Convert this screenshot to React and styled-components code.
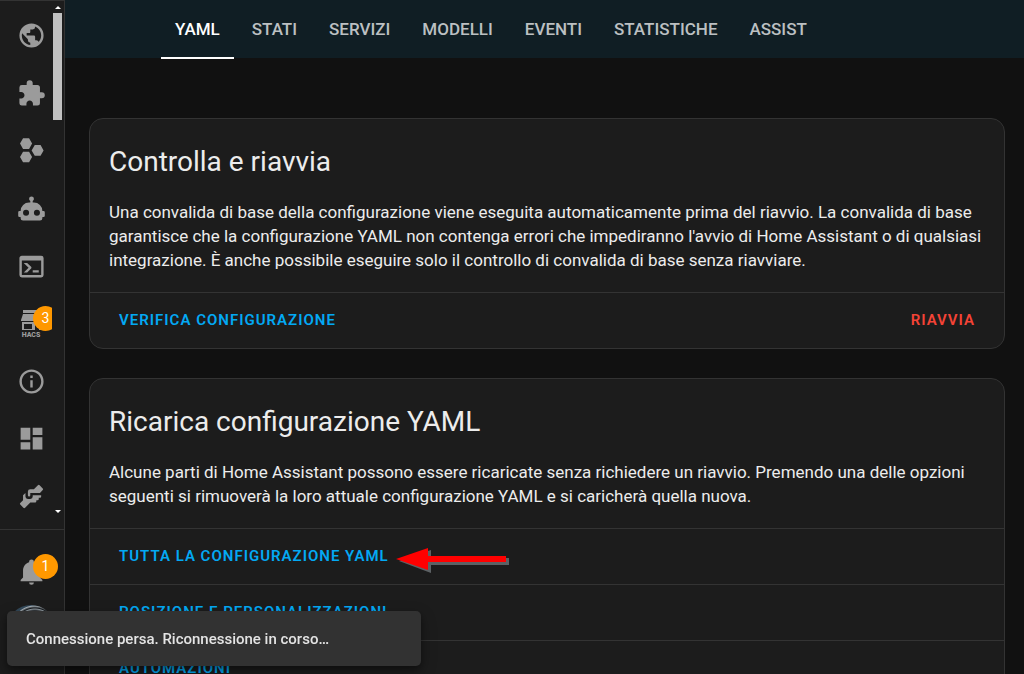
import React from "react";
import styled, { createGlobalStyle, css } from "styled-components";

const Global = createGlobalStyle`
  *, *::before, *::after { box-sizing: border-box; }
  body { margin: 0; background: #111; color: #ececec; font-family: Roboto, "Noto Sans", sans-serif; }
  button { font: inherit; background: none; border: 0; padding: 0; cursor: pointer; }
`;

const Shell = styled.div`display: flex; height: 100vh; overflow: hidden;`;

const Sidebar = styled.aside`
  flex: none; width: 65px; display: flex; flex-direction: column;
  background: #1c1c1c; border-right: 1px solid #333; border-top: 1px solid #333;
`;
const NavArea = styled.div`display: flex; flex: 1; min-height: 0;`;
const NavList = styled.nav`
  width: 52px; padding: 6px 0 4px; overflow: hidden;
  display: flex; flex-direction: column;
`;
const iconSlot = css`
  position: relative; display: flex; align-items: center; padding-left: 17px; color: #9b9b9b;
  svg { width: 29px; height: 29px; flex: none; fill: currentColor; }
`;
const NavItem = styled.a`${iconSlot} flex: 1;`;
const Badge = styled.span`
  position: absolute; left: 33px; top: ${(p) => p.$top}px; width: 25px; height: 25px;
  border-radius: 50%; background: #ff9800; color: #fff;
  font-size: 14px; line-height: 24px; text-align: center;
`;
const Scrollbar = styled.div`
  width: 12px; padding: 5px 2px 16px 1px; display: flex; flex-direction: column; align-items: center;
`;
const Thumb = styled.div`width: 9px; height: 107px; margin: 4px 0 auto; background: #c1c1c1;`;
const Caret = styled.div`
  border: 3px solid transparent; border-top-width: 0; border-bottom: 3px solid #fff;
  ${(p) => p.$down && "transform: rotate(180deg);"}
`;
const SidebarFoot = styled.div`flex: none; height: 145px; border-top: 1px solid #333; padding-top: 12px;`;
const FootItem = styled.button`${iconSlot} height: 58px; width: 100%;`;
const ProfileItem = styled(FootItem)`padding-left: 7px;`;
const Avatar = styled.span`
  width: 48px; height: 48px; border-radius: 50%;
  background: radial-gradient(circle at 58% 50%, #15181b 0 18px, #8f989e 20px, #14181c 21px, #a9b2b8 23px, #33495a 24px);
`;

const Main = styled.main`flex: 1; min-width: 0;`;
const Header = styled.header`
  height: 58px; padding-left: 96px; display: flex; gap: 4px; background: #101e24;
`;
const Tab = styled.button`
  padding: 0 14px 2px; height: 59px; font-size: 17px; font-weight: 500; color: #bcc0c2;
  ${(p) => p.$active && "color: #fff; box-shadow: inset 0 -2px #fff;"}
`;
const Content = styled.div`
  padding: 60px 19px 0 24px; display: flex; flex-direction: column; gap: 29px;
`;
const Card = styled.section`background: #1c1c1c; border: 1px solid #333; border-radius: 14px;`;
const CardBody = styled.div`padding: 21px 19px 20px;`;
const Title = styled.h1`margin: 0 0 16px; font-size: 28px; line-height: 44px; font-weight: 400;`;
const Text = styled.p`margin: 0; font-size: 17px; line-height: 24px;`;
const Row = styled.div`
  height: 56px; border-top: 1px solid #333; padding: 0 29px 2px;
  display: flex; align-items: center; justify-content: space-between;
`;
const Action = styled.button`
  position: relative; font-size: 15px; line-height: 20px; font-weight: 600; letter-spacing: 1px;
  text-transform: uppercase; color: ${(p) => (p.$danger ? "#f44336" : "#03a9f4")};
`;
const Pointer = styled.svg`position: absolute; left: 100%; top: 0; margin-left: 7px; overflow: visible;`;
const Snackbar = styled.div`
  position: fixed; left: 7px; bottom: 8px; width: 414px; height: 55px; padding: 0 19px;
  display: flex; align-items: center; border-radius: 5px; background: #323232; color: #e4e4e4;
  font-size: 15px; font-weight: 500; box-shadow: 0 3px 6px rgba(0,0,0,.3), 0 6px 16px rgba(0,0,0,.3);
`;

const Icon = ({ d }) => <svg viewBox="0 0 24 24" aria-hidden="true"><path d={d} /></svg>;

const paths = {
  earth: "M17.9,17.39C17.64,16.59 16.89,16 16,16H15V13A1,1 0 0,0 14,12H8V10H10A1,1 0 0,0 11,9V7H13A2,2 0 0,0 15,5V4.59C17.93,5.77 20,8.64 20,12C20,14.08 19.2,15.97 17.9,17.39M11,19.93C7.05,19.44 4,16.08 4,12C4,11.38 4.08,10.78 4.21,10.21L9,15V16A2,2 0 0,0 11,18M12,2A10,10 0 0,0 2,12A10,10 0 0,0 12,22A10,10 0 0,0 22,12A10,10 0 0,0 12,2Z",
  puzzle: "M20.5,11H19V7C19,5.89 18.1,5 17,5H13V3.5A2.5,2.5 0 0,0 10.5,1A2.5,2.5 0 0,0 8,3.5V5H4A2,2 0 0,0 2,7V10.8H3.5C5,10.8 6.2,12 6.2,13.5C6.2,15 5,16.2 3.5,16.2H2V20A2,2 0 0,0 4,22H7.8V20.5C7.8,19 9,17.8 10.5,17.8C12,17.8 13.2,19 13.2,20.5V22H17A2,2 0 0,0 19,20V16H20.5A2.5,2.5 0 0,0 23,13.5A2.5,2.5 0 0,0 20.5,11Z",
  hexagons: "M5,1.9H10L12.5,6.3L10,10.7H5L2.500,6.3ZM5,13H10L12.5,17.4L10,21.800H5L2.500,17.4ZM14.7,7.5H19.5L22,11.9L19.5,16.300H14.7L12.1,11.9Z",
  robot: "M12,2A2,2 0 0,1 14,4C14,4.74 13.6,5.39 13,5.73V7H14A7,7 0 0,1 21,14H22A1,1 0 0,1 23,15V18A1,1 0 0,1 22,19H21V20A2,2 0 0,1 19,22H5A2,2 0 0,1 3,20V19H2A1,1 0 0,1 1,18V15A1,1 0 0,1 2,14H3A7,7 0 0,1 10,7H11V5.73C10.4,5.39 10,4.74 10,4A2,2 0 0,1 12,2M7.5,13A2.5,2.5 0 0,0 5,15.5A2.5,2.5 0 0,0 7.5,18A2.5,2.5 0 0,0 10,15.5A2.5,2.5 0 0,0 7.5,13M16.5,13A2.5,2.5 0 0,0 14,15.5A2.5,2.5 0 0,0 16.5,18A2.5,2.5 0 0,0 19,15.5A2.5,2.5 0 0,0 16.5,13Z",
  terminal: "M20,19V7H4V19H20M20,3A2,2 0 0,1 22,5V19A2,2 0 0,1 20,21H4A2,2 0 0,1 2,19V5C2,3.89 2.9,3 4,3H20M13,17V15H18V17H13M9.58,13L5.57,9H8.4L11.7,12.3C12.09,12.69 12.09,13.33 11.7,13.72L8.42,17H5.59L9.58,13Z",
  info: "M11,9H13V7H11M12,20C7.59,20 4,16.41 4,12C4,7.59 7.59,4 12,4C16.41,4 20,7.59 20,12C20,16.41 16.41,20 12,20M12,2A10,10 0 0,0 2,12A10,10 0 0,0 12,22A10,10 0 0,0 22,12A10,10 0 0,0 12,2M11,17H13V11H11V17Z",
  dashboard: "M13,3V9H21V3M13,21H21V11H13M3,21H11V15H3M3,13H11V3H3V13Z",
  hands: "M11 6H14L17.29 2.7A1 1 0 0 1 18.71 2.7L21.29 5.29A1 1 0 0 1 21.29 6.7L19 9H11V11A1 1 0 0 1 10 12A1 1 0 0 1 9 11V8A2 2 0 0 1 11 6M5 11V15L2.71 17.29A1 1 0 0 0 2.71 18.71L5.29 21.29A1 1 0 0 0 6.71 21.29L11 17H15A1 1 0 0 0 16 16V15H17A1 1 0 0 0 18 14V13H19A1 1 0 0 0 20 12V11H13V12A2 2 0 0 1 11 14H9A2 2 0 0 1 7 12V9L5 11Z",
  bell: "M21,19V20H3V19L5,17V11C5,7.9 7.03,5.17 10,4.29C10,4.19 10,4.1 10,4A2,2 0 0,1 12,2A2,2 0 0,1 14,4C14,4.1 14,4.19 14,4.29C16.97,5.17 19,7.9 19,11V17L21,19M14,21A2,2 0 0,1 12,23A2,2 0 0,1 10,21",
};

const HacsIcon = () => (
  <svg viewBox="0 0 29 29" aria-hidden="true">
    <path d="M6 1H23V4H6ZM6 5H23L25 11V12H4V11ZM5 13H24V21H5ZM7 15V20H15V15ZM18 14V21H22V14Z" fillRule="evenodd" />
    <text x="14" y="28" textAnchor="middle" fontSize="7" fontWeight="900">HACS</text>
  </svg>
);

const nav = [
  ["Mappa", "earth"], ["Componenti", "puzzle"], ["Zigbee", "hexagons"], ["Robot", "robot"],
  ["Terminale", "terminal"], ["HACS", "hacs", 3], ["Informazioni", "info"],
  ["Plancia", "dashboard"], ["Assistenza", "hands"],
];
const tabs = ["YAML", "STATI", "SERVIZI", "MODELLI", "EVENTI", "STATISTICHE", "ASSIST"];

export default function App() {
  return (
    <Shell>
      <Global />
      <Sidebar>
        <NavArea>
          <NavList>
            {nav.map(([label, icon, count]) => (
              <NavItem key={label} href="#" aria-label={label}>
                {icon === "hacs" ? <HacsIcon /> : <Icon d={paths[icon]} />}
                {count && <Badge $top={11}>{count}</Badge>}
              </NavItem>
            ))}
          </NavList>
          <Scrollbar><Caret /><Thumb /><Caret $down /></Scrollbar>
        </NavArea>
        <SidebarFoot>
          <FootItem aria-label="Notifiche"><Icon d={paths.bell} /><Badge $top={12}>1</Badge></FootItem>
          <ProfileItem aria-label="Profilo"><Avatar /></ProfileItem>
        </SidebarFoot>
      </Sidebar>
      <Main>
        <Header>{tabs.map((t, i) => <Tab key={t} $active={i === 0}>{t}</Tab>)}</Header>
        <Content>
          <Card>
            <CardBody>
              <Title>Controlla e riavvia</Title>
              <Text>
                Una convalida di base della configurazione viene eseguita automaticamente prima del riavvio. La convalida di base garantisce che la configurazione YAML non contenga errori che impediranno l'avvio di Home Assistant o di qualsiasi integrazione. È anche possibile eseguire solo il controllo di convalida di base senza riavviare.
              </Text>
            </CardBody>
            <Row>
              <Action>Verifica configurazione</Action>
              <Action $danger>Riavvia</Action>
            </Row>
          </Card>
          <Card>
            <CardBody>
              <Title>Ricarica configurazione YAML</Title>
              <Text>
                Alcune parti di Home Assistant possono essere ricaricate senza richiedere un riavvio. Premendo una delle opzioni seguenti si rimuoverà la loro attuale configurazione YAML e si caricherà quella nuova.
              </Text>
            </CardBody>
            <Row>
              <Action>
                Tutta la configurazione YAML
                <Pointer width="113" height="26" viewBox="0 0 113 26" aria-hidden="true">
                  <path d="M3 15 35 4V12H113V19H35V27Z" fill="#5c6164" />
                  <path d="M0 13 32 2V10H110V16H32V24Z" fill="#f00" />
                </Pointer>
              </Action>
            </Row>
            <Row><Action>Posizione e personalizzazioni</Action></Row>
            <Row><Action>Automazioni</Action></Row>
          </Card>
        </Content>
      </Main>
      <Snackbar role="status">Connessione persa. Riconnessione in corso…</Snackbar>
    </Shell>
  );
}
